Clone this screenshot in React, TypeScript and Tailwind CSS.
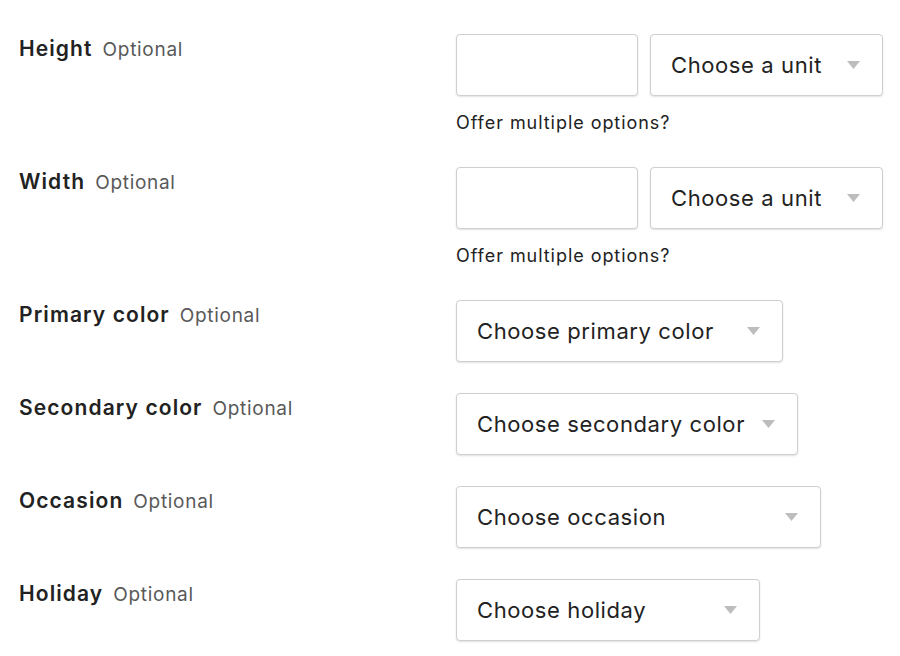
import React from "react";

type Field = {
  label: string;
  kind: "measure" | "select";
  placeholder: string;
  widthClass?: string;
};

const fields: Field[] = [
  { label: "Height", kind: "measure", placeholder: "Choose a unit" },
  { label: "Width", kind: "measure", placeholder: "Choose a unit" },
  { label: "Primary color", kind: "select", placeholder: "Choose primary color", widthClass: "w-[327px]" },
  { label: "Secondary color", kind: "select", placeholder: "Choose secondary color", widthClass: "w-[342px]" },
  { label: "Occasion", kind: "select", placeholder: "Choose occasion", widthClass: "w-[365px]" },
  { label: "Holiday", kind: "select", placeholder: "Choose holiday", widthClass: "w-[304px]" },
];

const Caret = () => (
  <svg width="13" height="8" viewBox="0 0 13 8" className="shrink-0">
    <path d="M0 0 H13 L6.5 8 Z" fill="#bdbdbd" />
  </svg>
);

const SelectBox: React.FC<{ text: string; className: string }> = ({ text, className }) => (
  <div
    className={`flex h-[62px] items-center justify-between rounded-[4px] border border-[#cfcfcf] bg-white pl-[20px] pr-[22px] text-[22px] tracking-[0.6px] text-[#222] shadow-[0_1px_2px_rgba(0,0,0,0.12)] ${className}`}
  >
    <span className="whitespace-nowrap">{text}</span>
    <Caret />
  </div>
);

export default function App() {
  return (
    <div
      className="min-h-[656px] bg-white pl-[19px] pt-[34px]"
      style={{ fontFamily: "Inter, 'Noto Sans', Arial, sans-serif" }}
    >
      {fields.map((f) => (
        <div key={f.label} className="mb-[31px] flex">
          <div className="w-[437px] shrink-0 pt-[1px] leading-[28px] whitespace-nowrap">
            <span className="text-[21px] font-semibold tracking-[1.1px] text-[#222]">{f.label}</span>
            <span className="ml-[10px] text-[19px] tracking-[0.7px] text-[#595959]">Optional</span>
          </div>
          {f.kind === "measure" ? (
            <div>
              <div className="flex gap-[12px]">
                <div className="h-[62px] w-[182px] rounded-[4px] border border-[#cfcfcf] bg-white shadow-[0_1px_2px_rgba(0,0,0,0.12)]" />
                <SelectBox text={f.placeholder} className="w-[233px]" />
              </div>
              <div className="mt-[13px] h-[27px] whitespace-nowrap text-[18px] leading-[27px] tracking-[0.95px] text-[#222]">
                Offer multiple options?
              </div>
            </div>
          ) : (
            <SelectBox text={f.placeholder} className={f.widthClass ?? ""} />
          )}
        </div>
      ))}
    </div>
  );
}
